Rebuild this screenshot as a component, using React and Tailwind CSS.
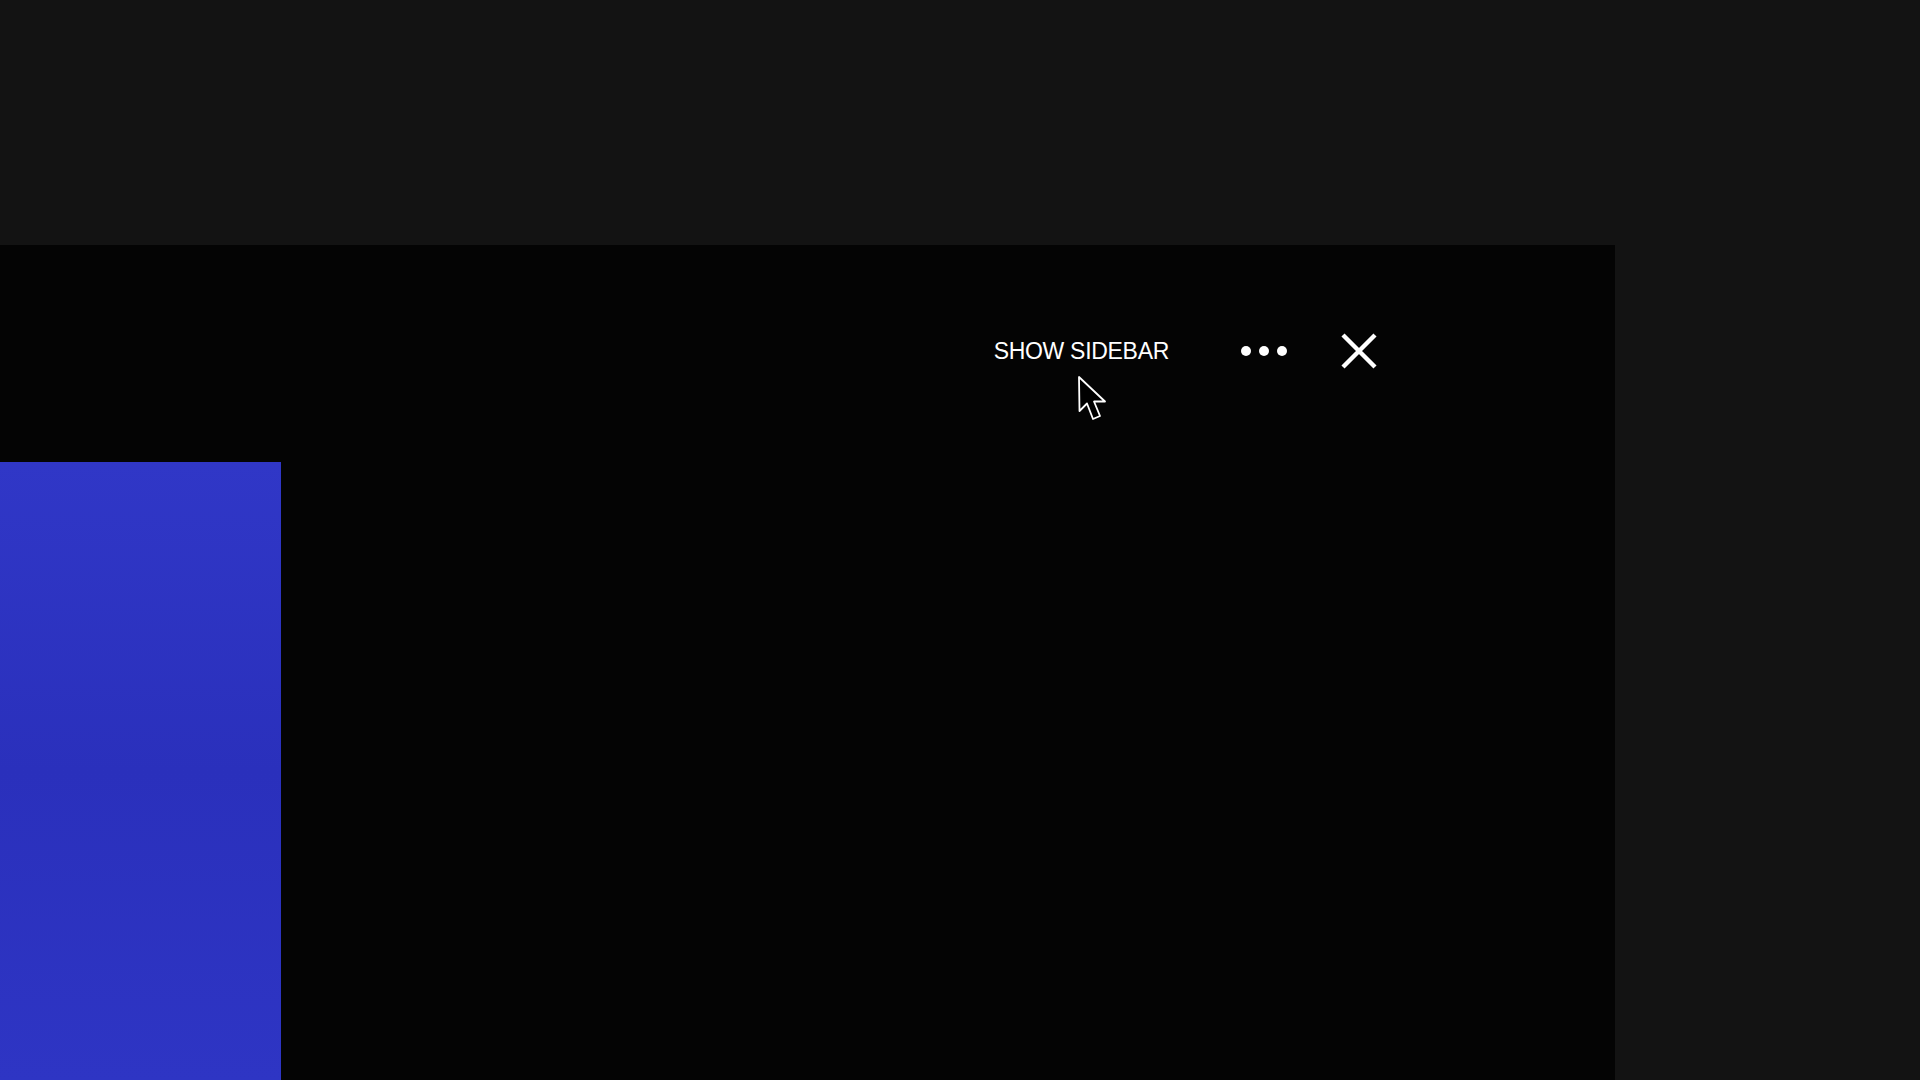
import React from 'react';

function Cursor() {
  return (
    <svg
      className="absolute left-[1076px] top-[374px] pointer-events-none"
      width="34"
      height="50"
      viewBox="0 0 34 50"
    >
      <path
        d="M3 3 L3.5 37 L11 29.5 L17 45 L24 42 L18 27.5 L29 27.5 Z"
        fill="#000"
        stroke="#fff"
        strokeWidth="1.8"
        strokeLinejoin="round"
      />
    </svg>
  );
}

export default function App() {
  return (
    <div className="relative min-h-screen w-full bg-[#131313] pt-[245px] overflow-hidden font-['Liberation_Sans',Arial,sans-serif]">
      <div className="w-[1615px] h-[835px] bg-[#040404] flex flex-col">
        {/* top bar */}
        <div className="h-[212px] flex items-center justify-end pr-[238px]">
          <button className="text-white text-[23px] leading-none tracking-[-0.3px]">SHOW SIDEBAR</button>
          <div className="ml-[72px] flex items-center gap-[8px]">
            <span className="w-[10px] h-[10px] rounded-full bg-white" />
            <span className="w-[10px] h-[10px] rounded-full bg-white" />
            <span className="w-[10px] h-[10px] rounded-full bg-white" />
          </div>
          <button className="ml-[54px] w-[36px] h-[36px] flex items-center justify-center">
            <svg width="36" height="36" viewBox="0 0 36 36">
              <path d="M2 2 L34 34 M34 2 L2 34" stroke="#fff" strokeWidth="4.4" />
            </svg>
          </button>
        </div>

        <div className="mt-[5px] w-[281px] flex-1 bg-gradient-to-b from-[#3037c7] via-[#2a30bc] to-[#2e35c4]" />
      </div>
      <Cursor />
    </div>
  );
}
